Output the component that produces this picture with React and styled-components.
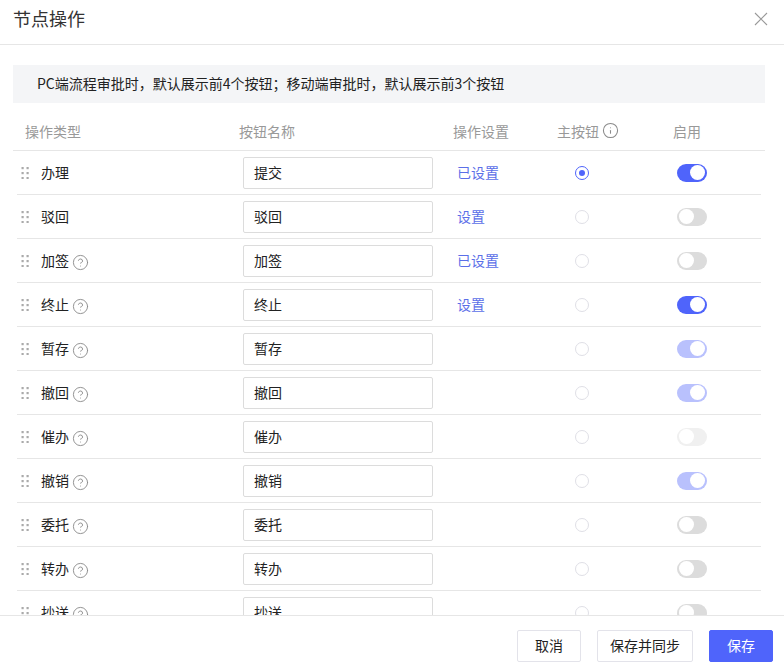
import React from "react";
import styled, { createGlobalStyle } from "styled-components";
import { CircleHelp, Info } from "lucide-react";

const Global = createGlobalStyle`
  html, body { margin: 0; padding: 0; background: #fff; }
  body { font-family: "Noto Sans CJK SC", "Noto Sans", sans-serif; color: #222; }
  * { box-sizing: border-box; }
`;

const Dialog = styled.div`
  width: 784px; height: 669px; display: flex; flex-direction: column; background: #fff; overflow: hidden;
`;
const Header = styled.header`
  height: 45px; flex: none; display: flex; align-items: center; justify-content: space-between;
  padding: 0 16px 6px 13px; border-bottom: 1px solid #e6e6e6;
`;
const Title = styled.h1`margin: 0 0 2px; font-size: 18px; font-weight: 400; color: #333; line-height: 24px;`;
const Close = styled.button`
  border: 0; background: none; padding: 0; width: 14px; height: 14px; display: flex; color: #999;
`;
const Body = styled.div`flex: 1; min-height: 0; overflow: hidden; padding: 20px 19px 0 13px;`;
const Notice = styled.div`
  height: 38px; background: #f4f5f7; padding: 0 0 2px 24px; display: flex; align-items: center;
  font-size: 14px; color: #222;
`;
const HeadRow = styled.div`
  display: grid; grid-template-columns: 214px 214px 104px 116px 1fr; height: 48px; align-items: center;
  padding: 8px 0 0 12px; border-bottom: 1px solid #e6e6e6; font-size: 14px; color: #999;
`;
const HeadCell = styled.div`display: flex; align-items: center; gap: 3px;`;
const Row = styled.div`
  display: grid; grid-template-columns: 222px 215px 117px 102px 1fr; height: 44px; align-items: center;
  margin: 0 4px; padding-left: 4px; border-bottom: 1px solid #e6e6e6; font-size: 14px;
`;
const TypeCell = styled.div`display: flex; align-items: center; font-size: 14px; color: #222;`;
const Handle = styled.svg`width: 8px; height: 12px; margin-right: 12px; fill: #aaa; flex: none;`;
const Label = styled.span`padding-bottom: 2px;`;
const Help = styled(CircleHelp)`margin: 3px 0 0 3px; color: #8a8a8a; flex: none;`;
const NameInput = styled.input`
  width: 190px; height: 32px; border: 1px solid #dcdcdc; border-radius: 2px; padding: 0 10px 2px;
  font: inherit; font-size: 14px; color: #222; outline: none; background: #fff; display: block;
`;
const LinkCell = styled.div`padding-bottom: 2px;`;
const SetLink = styled.a`color: #5b6fe8; font-size: 14px; cursor: pointer; margin-left: -1px;`;
const Radio = styled.span`
  width: 14px; height: 14px; border-radius: 50%; display: block; background: #fff;
  border: 1px solid ${p => (p.$on ? "#4f64fb" : "#dfdfe6")};
  position: relative;
  &::after {
    content: ""; display: ${p => (p.$on ? "block" : "none")}; position: absolute;
    left: 3px; top: 3px; width: 6px; height: 6px; border-radius: 50%; background: #4f64fb;
  }
`;
const trackColor = p => {
  if (p.$on) return p.$disabled ? "#b9c1fd" : "#4f64fb";
  return p.$disabled ? "#f0f0f0" : "#dcdcdc";
};
const Toggle = styled.span`
  width: 30px; height: 18px; border-radius: 9px; display: flex; align-items: center; padding: 0 2px;
  justify-content: ${p => (p.$on ? "flex-end" : "flex-start")};
  background: ${trackColor};
  &::after { content: ""; width: 15px; height: 15px; border-radius: 50%; background: #fff; }
`;
const Footer = styled.footer`
  height: 54px; flex: none; border-top: 1px solid #e6e6e6; display: flex; justify-content: flex-end;
  gap: 16px; padding: 14px 11px 0 0; 
`;
const Button = styled.button`
  height: 32px; width: ${p => p.$w}px; border-radius: 2px; font: inherit; font-size: 14px; padding: 0 0 2px;
  border: 1px solid ${p => (p.$primary ? "#4f64fb" : "#e3e3ea")};
  background: ${p => (p.$primary ? "#4f64fb" : "#fff")};
  color: ${p => (p.$primary ? "#fff" : "#222")};
`;

const rows = [
  { t: "办理", n: "提交", link: "已设置", main: true, on: true },
  { t: "驳回", n: "驳回", link: "设置" },
  { t: "加签", n: "加签", link: "已设置", help: true },
  { t: "终止", n: "终止", link: "设置", help: true, on: true },
  { t: "暂存", n: "暂存", help: true, on: true, dis: true },
  { t: "撤回", n: "撤回", help: true, on: true, dis: true },
  { t: "催办", n: "催办", help: true, dis: true },
  { t: "撤销", n: "撤销", help: true, on: true, dis: true },
  { t: "委托", n: "委托", help: true },
  { t: "转办", n: "转办", help: true },
  { t: "抄送", n: "抄送", help: true },
];

const Dots = () => (
  <Handle viewBox="0 0 8 12">
    {[0, 5, 10].map(y => [0, 5].map(x => <rect key={`${x}-${y}`} x={x + 0.5} y={y} width="2.2" height="2.2" />))}
  </Handle>
);

export default function App() {
  return (
    <Dialog>
      <Global />
      <Header>
        <Title>节点操作</Title>
        <Close aria-label="关闭">
          <svg width="14" height="14" viewBox="0 0 14 14" fill="none" stroke="currentColor" strokeWidth="1.1">
            <path d="M1 1 L13 13 M13 1 L1 13" />
          </svg>
        </Close>
      </Header>
      <Body>
        <Notice>PC端流程审批时，默认展示前4个按钮；移动端审批时，默认展示前3个按钮</Notice>
        <HeadRow>
          <HeadCell>操作类型</HeadCell>
          <HeadCell>按钮名称</HeadCell>
          <HeadCell>操作设置</HeadCell>
          <HeadCell>主按钮<Info size={17} strokeWidth={1.5} color="#8a8a8a" /></HeadCell>
          <HeadCell>启用</HeadCell>
        </HeadRow>
        {rows.map(r => (
          <Row key={r.t}>
            <TypeCell>
              <Dots />
              <Label>{r.t}</Label>
              {r.help && <Help size={17} strokeWidth={1.3} />}
            </TypeCell>
            <div><NameInput defaultValue={r.n} /></div>
            <LinkCell>{r.link && <SetLink>{r.link}</SetLink>}</LinkCell>
            <div><Radio $on={r.main} /></div>
            <Toggle $on={r.on} $disabled={r.dis} />
          </Row>
        ))}
      </Body>
      <Footer>
        <Button $w={64}>取消</Button>
        <Button $w={96}>保存并同步</Button>
        <Button $w={64} $primary>保存</Button>
      </Footer>
    </Dialog>
  );
}
